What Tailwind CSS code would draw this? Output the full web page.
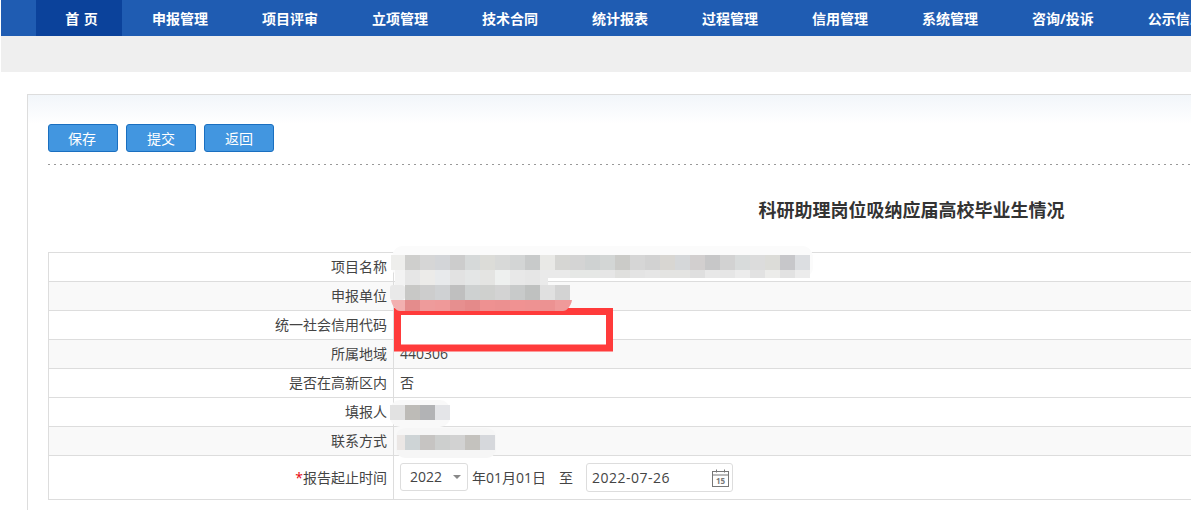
<!DOCTYPE html>
<html lang="zh-CN">
<head>
    <meta charset="UTF-8">
    <title>科研助理岗位吸纳应届高校毕业生情况</title>
    <script src="https://cdn.jsdelivr.net/npm/@tailwindcss/browser@4"></script>
</head>
<body class="relative bg-white h-[510px] overflow-hidden font-['Open_Sans','Noto_Sans_CJK_SC',sans-serif] text-sm text-[#444]">
    <!-- top nav -->
    <nav class="ml-px h-9 bg-[#1f5cb2] flex items-center pl-[35px] text-sm font-bold text-white whitespace-nowrap overflow-hidden">
        <a class="w-[86px] h-9 shrink-0 bg-[#0b429b] flex items-center justify-center pl-[5px] pt-px [word-spacing:1px]">首 页</a>
        <div class="flex ml-[3px] pt-px">
            <a class="px-[27px] shrink-0">申报管理</a>
            <a class="px-[27px] shrink-0">项目评审</a>
            <a class="px-[27px] shrink-0">立项管理</a>
            <a class="px-[27px] shrink-0">技术合同</a>
            <a class="px-[27px] shrink-0">统计报表</a>
            <a class="px-[27px] shrink-0">过程管理</a>
            <a class="px-[27px] shrink-0">信用管理</a>
            <a class="px-[27px] shrink-0">系统管理</a>
            <a class="px-[27px] shrink-0">咨询/投诉</a>
            <a class="px-[27px] shrink-0">公示信息</a>
        </div>
    </nav>
    <div class="ml-px h-9 bg-[#efefef]"></div>

    <!-- main panel -->
    <div class="ml-[27px] mt-[22px] w-[1300px] border border-[#ddd] h-[500px]">
        <div class="h-[29px] bg-gradient-to-b from-[#f2f6fa] to-white"></div>
        <div class="pl-5">
            <div class="flex gap-2">
                <button class="w-[70px] h-7 pt-px pr-[2px] bg-[#4296e0] border border-[#1a6fc0] rounded-[3px] text-white">保存</button>
                <button class="w-[70px] h-7 pt-px bg-[#4296e0] border border-[#1a6fc0] rounded-[3px] text-white">提交</button>
                <button class="w-[70px] h-7 pt-px bg-[#4296e0] border border-[#1a6fc0] rounded-[3px] text-white">返回</button>
            </div>
            <div class="mt-3 h-px bg-[repeating-linear-gradient(to_right,#999_0,#999_2px,transparent_2px,transparent_6px)]"></div>
            <h1 class="w-[1727px] mt-[33px] h-6 text-center text-[18px] leading-6 font-bold text-[#333]">科研助理岗位吸纳应届高校毕业生情况</h1>

            <table class="mt-[30px] w-[1260px] table-fixed border-collapse border border-[#ddd]">
                <colgroup><col class="w-[345px]"><col></colgroup>
                <tbody>
                    <tr class="h-[29px]">
                        <td class="border border-[#ddd] text-right pr-[6px]">项目名称</td>
                        <td class="border border-[#ddd] pl-[6px]"></td>
                    </tr>
                    <tr class="h-[29px] bg-[#f9f9f9]">
                        <td class="border border-[#ddd] text-right pr-[6px]">申报单位</td>
                        <td class="border border-[#ddd] pl-[6px]"></td>
                    </tr>
                    <tr class="h-[29px]">
                        <td class="border border-[#ddd] text-right pr-[6px]">统一社会信用代码</td>
                        <td class="border border-[#ddd] pl-[6px]"></td>
                    </tr>
                    <tr class="h-[29px] bg-[#f9f9f9]">
                        <td class="border border-[#ddd] text-right pr-[6px]">所属地域</td>
                        <td class="border border-[#ddd] pl-[6px]">440306</td>
                    </tr>
                    <tr class="h-[29px]">
                        <td class="border border-[#ddd] text-right pr-[6px]">是否在高新区内</td>
                        <td class="border border-[#ddd] pl-[6px]">否</td>
                    </tr>
                    <tr class="h-[29px]">
                        <td class="border border-[#ddd] text-right pr-[6px]">填报人</td>
                        <td class="border border-[#ddd] pl-[6px]"></td>
                    </tr>
                    <tr class="h-[29px] bg-[#f9f9f9]">
                        <td class="border border-[#ddd] text-right pr-[6px]">联系方式</td>
                        <td class="border border-[#ddd] pl-[6px]"></td>
                    </tr>
                    <tr class="h-11">
                        <td class="border border-[#ddd] text-right pr-[6px]"><span class="text-red-600">*</span>报告起止时间</td>
                        <td class="border border-[#ddd] pl-[6px]">
                            <div class="flex items-center">
                                <div class="w-[68px] h-7 mb-[2px] border border-[#ddd] rounded-[3px] flex items-center justify-between pl-[9px] pr-[6px] bg-white">
                                    <span>2022</span>
                                    <span class="w-0 h-0 border-x-[4px] border-x-transparent border-t-[4px] border-t-[#888]"></span>
                                </div>
                                <span class="ml-1">年01月01日</span>
                                <span class="ml-[13px]">至</span>
                                <div class="ml-[13px] w-[147px] h-[29px] border border-[#ddd] rounded-[3px] flex items-center justify-between pl-[5px] pr-[3px] bg-white">
                                    <span class="tracking-[0.5px]">2022-07-26</span>
                                    <svg width="17" height="18" viewBox="0 0 17 18" fill="none" stroke="#777">
                                        <rect x="0.500" y="2.500" width="16" height="15"/>
                                        <path d="M0.500 6h16M4.500 0.500v3M12.500 0.500v3"/>
                                        <text x="8.500" y="15" text-anchor="middle" font-size="8" font-weight="700" fill="#777" stroke="none">15</text>
                                    </svg>
                                </div>
                            </div>
                        </td>
                    </tr>
                </tbody>
            </table>
        </div>
    </div>

    <!-- red marker and pixelated masks lie over the table -->
    <svg class="absolute left-0 top-0 pointer-events-none" width="1191" height="510">
        <rect x="397.500" y="311.500" width="212" height="36.500" fill="#fff" stroke="#ff3b3b" stroke-width="7"/>

        <rect x="392" y="246" width="421" height="32" rx="11" fill="#fbfbfb"/>
        <rect x="391" y="255" width="14" height="15" fill="#eeeeec"/>
        <rect x="405" y="255" width="15" height="15" fill="#cfcfcd"/>
        <rect x="420" y="255" width="15" height="15" fill="#d6d6d6"/>
        <rect x="435" y="255" width="15" height="15" fill="#d3d5d8"/>
        <rect x="450" y="255" width="15" height="15" fill="#cccccc"/>
        <rect x="465" y="255" width="15" height="15" fill="#d6d9d9"/>
        <rect x="480" y="255" width="15" height="15" fill="#dcdcd8"/>
        <rect x="495" y="255" width="15" height="15" fill="#d8d9d8"/>
        <rect x="510" y="255" width="15" height="15" fill="#d3d5d5"/>
        <rect x="525" y="255" width="15" height="15" fill="#c8caca"/>
        <rect x="540" y="255" width="15" height="15" fill="#e9e9e6"/>
        <rect x="555" y="255" width="15" height="15" fill="#d6d6d3"/>
        <rect x="570" y="255" width="15" height="15" fill="#d4d4d4"/>
        <rect x="585" y="255" width="15" height="15" fill="#cfd2d2"/>
        <rect x="600" y="255" width="15" height="15" fill="#d3d6d5"/>
        <rect x="615" y="255" width="15" height="15" fill="#cbcbc8"/>
        <rect x="630" y="255" width="15" height="15" fill="#d6d6d6"/>
        <rect x="645" y="255" width="15" height="15" fill="#d2d2d2"/>
        <rect x="660" y="255" width="15" height="15" fill="#d8d6d2"/>
        <rect x="675" y="255" width="15" height="15" fill="#d5d7d9"/>
        <rect x="690" y="255" width="15" height="15" fill="#d2cfcf"/>
        <rect x="705" y="255" width="15" height="15" fill="#c7c7c8"/>
        <rect x="720" y="255" width="15" height="15" fill="#d2d2d2"/>
        <rect x="735" y="255" width="15" height="15" fill="#d8dbdb"/>
        <rect x="750" y="255" width="15" height="15" fill="#dcdcdc"/>
        <rect x="765" y="255" width="15" height="15" fill="#dcdcd8"/>
        <rect x="780" y="255" width="15" height="15" fill="#c7c7ca"/>
        <rect x="795" y="255" width="15" height="15" fill="#dcdee1"/>

        <rect x="395" y="270" width="10" height="15" fill="#f3f3f3"/>
        <rect x="405" y="270" width="15" height="15" fill="#e6e6e6"/>
        <rect x="420" y="270" width="15" height="15" fill="#ecebe9"/>
        <rect x="435" y="270" width="15" height="15" fill="#e8eaec"/>
        <rect x="450" y="270" width="15" height="15" fill="#e2e2e2"/>
        <rect x="465" y="270" width="15" height="15" fill="#e4e6e6"/>
        <rect x="480" y="270" width="15" height="15" fill="#e4e4e2"/>
        <rect x="495" y="270" width="15" height="15" fill="#eef0ef"/>
        <rect x="510" y="270" width="15" height="15" fill="#e8e8e8"/>
        <rect x="525" y="270" width="15" height="15" fill="#e6e6e6"/>
        <rect x="540" y="270" width="8" height="15" fill="#eaeaea"/>
        <rect x="548" y="270" width="22" height="8" fill="#eaeaea"/>
        <rect x="570" y="270" width="30" height="8" fill="#e6e8e6"/>
        <rect x="600" y="270" width="15" height="8" fill="#e6e6e6"/>
        <rect x="615" y="270" width="15" height="8" fill="#e0e0de"/>
        <rect x="630" y="270" width="15" height="8" fill="#e4e4e4"/>
        <rect x="645" y="270" width="15" height="8" fill="#e6e6e6"/>
        <rect x="660" y="270" width="30" height="8" fill="#e4e4e2"/>
        <rect x="690" y="270" width="15" height="8" fill="#dfdfdf"/>
        <rect x="705" y="270" width="15" height="8" fill="#e8e8e8"/>
        <rect x="720" y="270" width="15" height="8" fill="#e6e6e6"/>
        <rect x="735" y="270" width="15" height="8" fill="#ececec"/>
        <rect x="750" y="270" width="15" height="8" fill="#e2e2e2"/>
        <rect x="765" y="270" width="15" height="8" fill="#ececea"/>
        <rect x="780" y="270" width="15" height="8" fill="#e2e2e2"/>
        <rect x="795" y="270" width="15" height="8" fill="#ececec"/>

        <rect x="390" y="285" width="15" height="15" rx="3" fill="#e9e9e9"/>
        <rect x="405" y="285" width="15" height="15" fill="#c8c8c6"/>
        <rect x="420" y="285" width="15" height="15" fill="#cdcdcd"/>
        <rect x="435" y="285" width="15" height="15" fill="#cfd1d3"/>
        <rect x="450" y="285" width="15" height="15" fill="#bfbfbf"/>
        <rect x="465" y="285" width="15" height="15" fill="#ced1d1"/>
        <rect x="480" y="285" width="15" height="15" fill="#cfd0ce"/>
        <rect x="495" y="285" width="15" height="15" fill="#d3d3d3"/>
        <rect x="510" y="285" width="15" height="15" fill="#c8caca"/>
        <rect x="525" y="285" width="15" height="15" fill="#bfc1c0"/>
        <rect x="540" y="285" width="15" height="15" fill="#e0e0e0"/>
        <rect x="555" y="285" width="15" height="15" fill="#d3d3d3"/>

        <path d="M391 300h14v11h-5c-4 0-8-5-9-11z" fill="#f2b0b0"/>
        <rect x="405" y="300" width="15" height="11" fill="#e48c8c"/>
        <rect x="420" y="300" width="15" height="11" fill="#ee9b9b"/>
        <rect x="435" y="300" width="15" height="11" fill="#ef9999"/>
        <rect x="450" y="300" width="15" height="11" fill="#e68f8f"/>
        <rect x="465" y="300" width="15" height="11" fill="#e48a8a"/>
        <rect x="480" y="300" width="15" height="11" fill="#ee9191"/>
        <rect x="495" y="300" width="15" height="11" fill="#ec9090"/>
        <rect x="510" y="300" width="15" height="11" fill="#f09292"/>
        <rect x="525" y="300" width="15" height="11" fill="#ee9292"/>
        <rect x="540" y="300" width="15" height="11" fill="#ec9292"/>
        <path d="M555 300h17c-1 6-5 11-9 11h-8z" fill="#ef9a9a"/>

        <rect x="390" y="400" width="60" height="27" rx="10" fill="#f9f9f9"/>
        <rect x="390" y="405" width="15" height="15" fill="#e2e2e2"/>
        <rect x="405" y="405" width="15" height="15" fill="#bdbbb7"/>
        <rect x="420" y="405" width="15" height="15" fill="#b2b3b5"/>
        <rect x="435" y="405" width="15" height="15" fill="#e4e5e8"/>

        <rect x="396" y="428" width="100" height="30" rx="9" fill="#f6f6f6"/>
        <rect x="397" y="435" width="8" height="15" fill="#ebe7e5"/>
        <rect x="405" y="435" width="15" height="15" fill="#ced4d6"/>
        <rect x="420" y="435" width="15" height="15" fill="#c6c4c2"/>
        <rect x="435" y="435" width="15" height="15" fill="#cdcfce"/>
        <rect x="450" y="435" width="15" height="15" fill="#d2d2d2"/>
        <rect x="465" y="435" width="15" height="15" fill="#c4c2be"/>
        <rect x="480" y="435" width="15" height="15" fill="#d6d8dc"/>
    </svg>
</body>
</html>
